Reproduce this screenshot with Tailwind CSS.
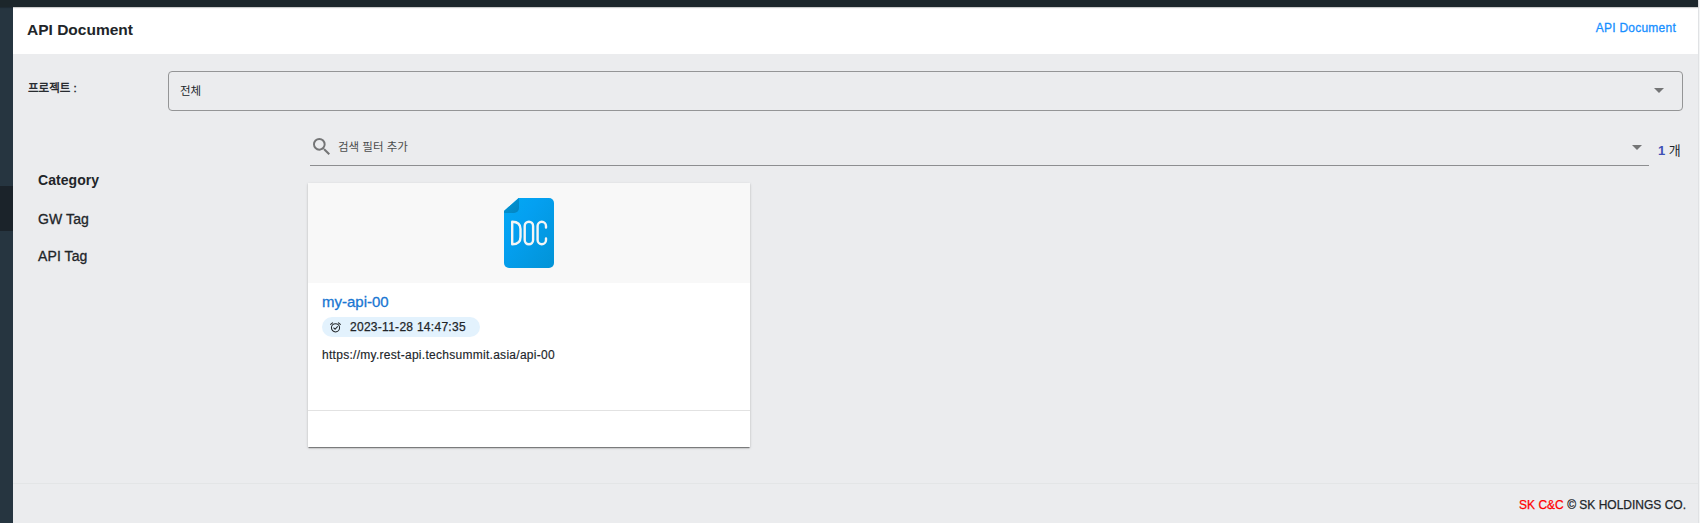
<!DOCTYPE html>
<html lang="ko">
<head>
<meta charset="utf-8">
<title>API Document</title>
<script src="https://cdn.jsdelivr.net/npm/@tailwindcss/browser@4"></script>
</head>
<body class="h-[523px] w-[1700px] overflow-hidden bg-[#ebecee] font-['Liberation_Sans','Noto_Sans_CJK_KR',sans-serif] text-[#212529]">
<div class="flex h-full flex-col">
  <div class="relative z-10 h-[7px] w-[1698px] shrink-0 bg-[#1c262b] shadow-[0_1px_1px_rgba(0,0,0,0.2)]"></div>
  <div class="flex min-h-0 flex-1">
    <aside class="w-[13px] shrink-0 bg-[#263540] pt-[179px]"><div class="h-[45px] bg-[#1b232a]"></div></aside>
    <div class="flex w-[1685px] shrink-0 flex-col">
      <header class="flex h-[47px] shrink-0 justify-between bg-white pl-[14px] pr-[22px]">
        <h1 class="pt-[12px] text-[15.5px] leading-[22px] font-bold">API Document</h1>
        <a class="pt-[11px] text-[12px] leading-[20px] tracking-[0.24px] text-[#1890ff] [-webkit-text-stroke:0.3px]">API Document</a>
      </header>
      <div class="flex h-[57px] shrink-0 pl-[15px]">
        <label class="w-[140px] pt-[24px] text-[11.5px] leading-[20px] [-webkit-text-stroke:0.4px]">프로젝트 :</label>
        <div class="mt-[17px] flex h-[40px] w-[1515px] items-center justify-between rounded-[4px] border border-[#949596] pr-[18px] pl-[11px] text-[11.5px]">
          <span class="leading-[20px]">전체</span>
          <svg class="-mt-px h-[5px] w-[10px]" viewBox="0 0 10 5"><path d="M0 0h10L5 5z" fill="#747576"/></svg>
        </div>
      </div>
      <main class="flex h-[372px] shrink-0">
        <nav class="w-[295px] pt-[59px] pl-[25px] text-[14px]">
          <div class="h-[39px] leading-[20px] font-bold tracking-[0.05px]">Category</div>
          <div class="h-[37px] leading-[20px] tracking-[0.1px] [-webkit-text-stroke:0.3px]">GW Tag</div>
          <div class="leading-[20px] tracking-[0.1px] [-webkit-text-stroke:0.3px]">API Tag</div>
        </nav>
        <section class="flex-1">
          <div class="flex h-[55px] pl-[2px]">
            <div class="flex w-[1339px] border-b border-[#8d8e90] pl-[3px]">
              <svg class="mt-[27px] h-[17px] w-[17px]" viewBox="3 3 17.49 17.49"><path fill="#747576" d="M15.5 14h-.79l-.28-.27A6.471 6.471 0 0 0 16 9.5 6.5 6.5 0 1 0 9.5 16c1.61 0 3.09-.59 4.23-1.57l.27.28v.79l5 4.99L20.49 19l-4.99-5zm-6 0C7.01 14 5 11.99 5 9.500S7.01 5 9.500 5 14 7.010 14 9.500 11.990 14 9.500 14z"/></svg>
              <span class="ml-[8px] flex-1 pt-[26px] text-[11.5px] leading-[20px] text-[#4b4c4d]">검색 필터 추가</span>
              <svg class="mt-[34px] mr-[7px] h-[5px] w-[10px]" viewBox="0 0 10 5"><path d="M0 0h10L5 5z" fill="#747576"/></svg>
            </div>
            <div class="pt-[30px] pl-[9px] text-[13px] leading-[20px]"><b class="text-[#3f51b5]">1</b> 개</div>
          </div>
          <article class="mt-[17px] flex h-[264px] w-[442px] flex-col bg-white shadow-[0_2px_1px_-1px_rgba(0,0,0,0.3),0_1px_1px_rgba(0,0,0,0.18),0_1px_3px_rgba(0,0,0,0.14)]">
            <div class="flex h-[100px] justify-center bg-[#f8f8f8] pt-[15px]">
              <svg class="h-[70px] w-[50px]" viewBox="0 0 50 70">
                <defs>
                  <linearGradient id="page" x1="0" y1="0" x2="1" y2="1"><stop offset="0" stop-color="#03a9f4"/><stop offset=".35" stop-color="#04a0f1"/><stop offset="1" stop-color="#0293d6"/></linearGradient>
                  <linearGradient id="fold" x1="0" y1="0" x2="1" y2="1"><stop offset=".4" stop-color="#0290cf"/><stop offset="1" stop-color="#0384c0"/></linearGradient>
                </defs>
                <path fill="url(#page)" d="M14.500 0H45a5 5 0 0 1 5 5v60a5 5 0 0 1-5 5H5a5 5 0 0 1-5-5V13z"/>
                <path fill="url(#fold)" d="M15 0v10a5 5 0 0 1-5 5H0v-2z"/>
                <g fill="none" stroke="#f5f5f5" stroke-width="2.400" stroke-linejoin="round" stroke-linecap="round"><path d="M8.200 23.700v22.600c5.500 0 8.300-2.600 8.300-7.300v-8c0-4.700-2.800-7.300-8.300-7.300z"/><rect x="20.700" y="23.700" width="8.400" height="22.600" rx="4.200"/><path d="M42 29.500v-1.500a4.200 4.200 0 0 0-8.400 0v14a4.200 4.200 0 0 0 8.400 0v-1.500"/></g>
              </svg>
            </div>
            <div class="flex h-[127px] flex-col items-start pt-[9px] pl-[14px]">
              <a class="text-[15px] leading-[20px] text-[#1976d2] [-webkit-text-stroke:0.3px]">my-api-00</a>
              <div class="mt-[5px] flex h-[20px] w-[158px] items-center rounded-full bg-[#e3f2fd] pl-[8px]">
                <svg class="h-[11px] w-[11px]" viewBox="0 0 10 10" fill="none" stroke="#212529" stroke-width=".95" stroke-linecap="round"><circle cx="5" cy="5.300" r="3.700"/><path d="M.6 2.200 2.300.8M7.700.8 9.400 2.200M3.400 5.400l1.200 1.200 2.200-2.300"/></svg>
                <span class="ml-[9px] text-[12px] tracking-[0.28px] [-webkit-text-stroke:0.25px]">2023-11-28 14:47:35</span>
              </div>
              <p class="mt-[9px] text-[12px] leading-[18px] tracking-[0.28px] [-webkit-text-stroke:0.15px]">https://my.rest-api.techsummit.asia/api-00</p>
            </div>
            <div class="flex-1 border-t border-[#e2e2e2]"></div>
          </article>
        </section>
      </main>
      <footer class="flex-1 border-t border-[#e3e5e6] pt-[11px] pr-[12px] text-right text-[12px] leading-[20px] [-webkit-text-stroke:0.25px]"><span class="text-[#f00]">SK C&amp;C</span> © SK HOLDINGS CO.</footer>
    </div>
    <div class="-mt-[7px] w-[2px] border-l border-[#e0e2e4] bg-[#f4f5f6]"></div>
  </div>
</div>
</body>
</html>
